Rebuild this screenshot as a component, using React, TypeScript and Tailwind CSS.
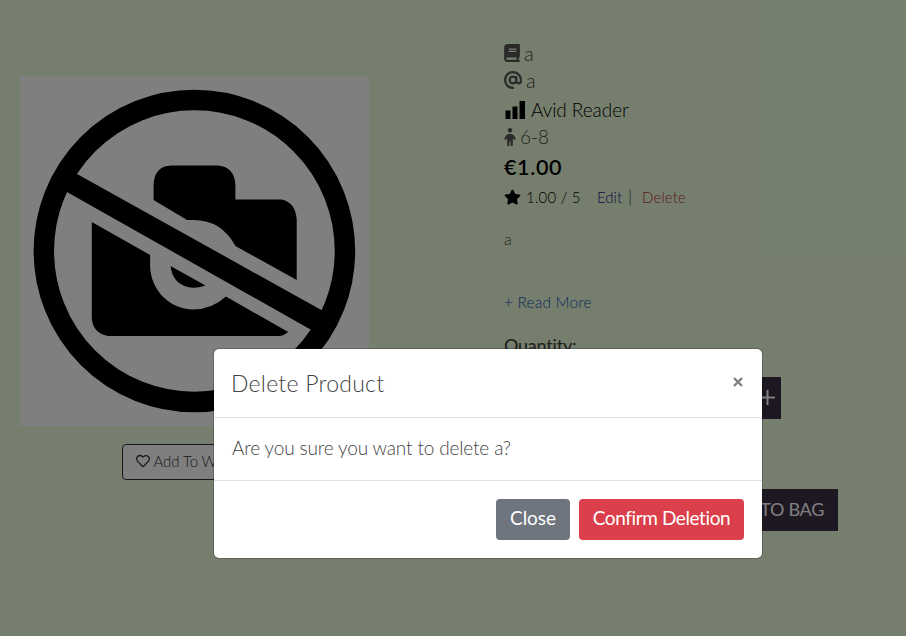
import { FaStar, FaRegHeart } from "react-icons/fa";
import { FaAt, FaBook, FaChild } from "react-icons/fa6";

function NoImage() {
  return (
    <svg viewBox="0 0 350 350" className="block h-[350px] w-[349px] bg-white" preserveAspectRatio="none">
      <circle cx="174.900" cy="175" r="151" fill="none" stroke="#000" strokeWidth="20.5" />
      <path d="M134 124V108Q135 90 152 89.500H199Q215 91 216 109V123.500H262Q276 126 277.500 143V204L216 170Q202 144 174 144H167.500Z" />
      <path d="M72 146L130.500 179V190C131 214 150 233.500 174 233.500Q193 233 206.500 220.500L269 256Q264 260 260 260H88Q73 257 72 242Z" />
      <path d="M151 190L186 209.500Q176 213 168 211Q153 207 151 190Z" />
      <path d="M50 94L313 240L302 259.500L40 112Z" />
    </svg>
  );
}

function BarsIcon() {
  return (
    <svg viewBox="0 0 20 18" className="h-[18px] w-5 fill-black">
      <path d="M0.500 9.500h5V18h-5zM7.500 5.500h5V18h-5zM14.500 0H20v18h-5.500z" />
    </svg>
  );
}

function ProductImage() {
  return (
    <section className="flex w-[349px] flex-col items-center pt-[76px]">
      <NoImage />
      <button className="mt-[18px] flex h-9 w-[146px] items-center gap-[4px] whitespace-nowrap rounded border border-[#372f42] bg-white pb-[2px] pl-[13px] text-[15px] text-[#333]">
        <FaRegHeart className="size-[14px] shrink-0" />
        <span className="tracking-[-0.100px]">Add To Wishlist</span>
      </button>
    </section>
  );
}

function ProductDetails() {
  return (
    <section className="ml-[135px] flex w-[334px] flex-col whitespace-nowrap pt-[39px] text-[#444]">
      <div className="flex h-7 items-center gap-1 text-[20px]">
        <FaBook className="h-[18px] w-4 text-[#555]" />
        <span>a</span>
      </div>
      <div className="flex h-[26px] items-center gap-1 text-[20px]">
        <FaAt className="size-[18px] text-[#555]" />
        <span>a</span>
      </div>
      <div className="flex h-[34px] items-center gap-[6px] pl-px text-[19px] text-black">
        <BarsIcon />
        <span className="tracking-[-0.05px]">Avid Reader</span>
      </div>
      <div className="flex h-5 items-center gap-1 text-[19px]">
        <FaChild className="h-[18px] w-[12px] text-[#555]" />
        <span>6-8</span>
      </div>
      <div className="flex h-[41px] items-center text-[21.600px] font-semibold tracking-[0.600px] text-black">€1.00</div>
      <div className="flex h-[18px] items-center text-[15px]">
        <FaStar className="mb-px mr-[5px] h-4 w-[17px] text-black" />
        <span className="w-[71px] tracking-[0.200px] text-black">1.00 / 5</span>
        <a className="w-[31px] text-[#1d0f87]">Edit</a>
        <span className="w-[14px] pb-[2px] text-[18px]">|</span>
        <a className="tracking-[0.150px] text-[#b8303c]">Delete</a>
      </div>
      <p className="flex h-[65px] items-center text-[16px]">a</p>
      <a className="flex h-[64px] items-center text-[15.500px] tracking-[0.150px] text-[#1450b4]">+ Read More</a>
      <strong className="flex h-5 items-center text-[18px] font-medium tracking-[-0.250px]">Quantity:</strong>
      <div className="mt-[22px] flex h-[42px] w-[277px] bg-white text-[24px] text-white">
        <button className="w-[42px] bg-[#392f42]">−</button>
        <span className="flex-1" />
        <button className="flex w-[42px] items-center justify-center bg-[#392f42] pb-px pl-[14px]">
          <svg viewBox="0 0 15 15" className="size-[15px] stroke-white stroke-2"><path d="M7.500 0V15M0 7.500H15" /></svg>
        </button>
      </div>
      <button className="mt-[70px] flex h-[42px] w-[150px] items-center justify-end self-end bg-[#3b3044] pb-px pr-[14px] text-[18px] font-normal tracking-[-0.300px] text-white">
        ADD TO BAG
      </button>
    </section>
  );
}

function DeleteDialog() {
  return (
    <div role="dialog" className="absolute left-[214px] top-[349px] flex h-[209px] w-[548px] flex-col rounded-[5px] bg-white text-[#444] shadow-[0_0_0_1px_rgba(0,0,0,0.2)]">
      <header className="flex h-[69px] items-center justify-between border-b border-[#dee2e6] pl-[17px] pr-[19px]">
        <h5 className="text-[23px] tracking-[0.250px]">Delete Product</h5>
        <button aria-label="Close" className="mb-[3px]">
          <svg viewBox="0 0 10 10" className="size-[10px] stroke-[#7f7f7f] stroke-[2.400]"><path d="M1 1L9 9M9 1L1 9" /></svg>
        </button>
      </header>
      <p className="flex h-[63px] items-center border-b border-[#dee2e6] px-[18px] pb-[2px] text-[19px] tracking-[-0.150px]">
        Are you sure you want to delete a?
      </p>
      <footer className="flex flex-1 items-center justify-end gap-[9px] px-[18px] text-[19px] font-normal text-white">
        <button className="h-[41px] w-[74px] rounded bg-[#6e757f] pb-[2px] tracking-[-0.050px]">Close</button>
        <button className="h-[41px] w-[165px] rounded bg-[#da3f4b] pb-[2px] tracking-[-0.400px]">Confirm Deletion</button>
      </footer>
    </div>
  );
}

export default function App() {
  return (
    <div className="relative h-[636px] w-[906px] overflow-hidden bg-[#ecffdc] font-['Lato',sans-serif] font-light">
      <main className="flex pl-5">
        <ProductImage />
        <ProductDetails />
      </main>
      <div className="absolute inset-0 bg-black/50" />
      <DeleteDialog />
    </div>
  );
}
